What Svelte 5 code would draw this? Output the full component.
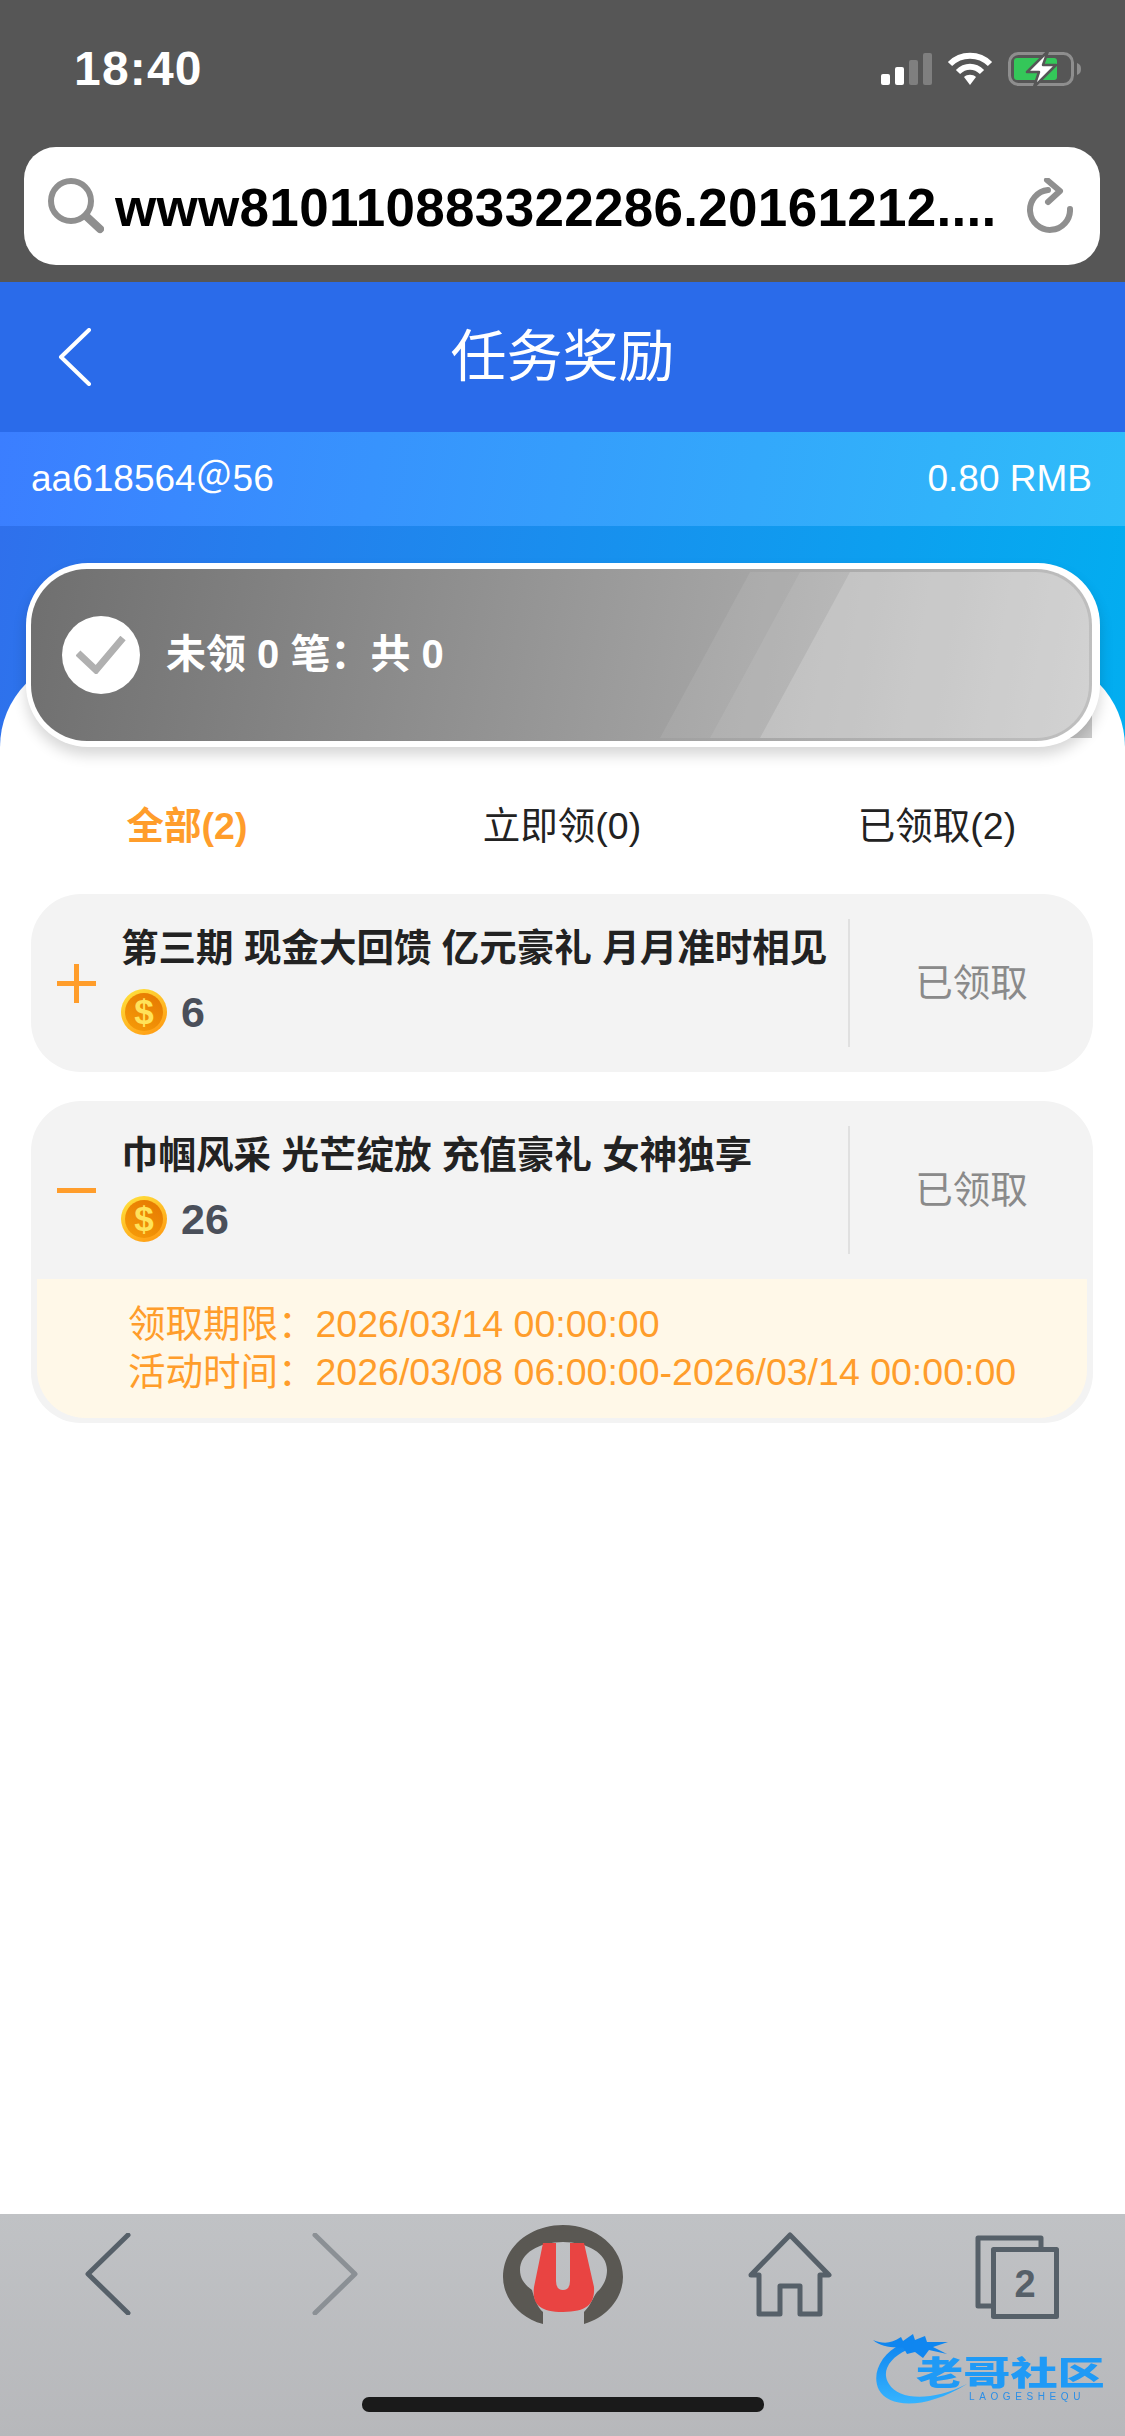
<script>
  const tabs = [
    { label: "全部(2)", active: true },
    { label: "立即领(0)", active: false },
    { label: "已领取(2)", active: false },
  ];

  const tasks = [
    { title: "第三期 现金大回馈 亿元豪礼 月月准时相见", coins: 6, open: false },
    {
      title: "巾帼风采 光芒绽放 充值豪礼 女神独享",
      coins: 26,
      open: true,
      deadline: "2026/03/14 00:00:00",
      period: "2026/03/08 06:00:00-2026/03/14 00:00:00",
    },
  ];
</script>

<div class="page">
  <div class="chrome">
    <div class="status">
      <span class="time">18:40</span>
      <div class="status-icons">
        <div class="signal">
          <i class="on h1"></i><i class="on h2"></i><i class="h3"></i><i class="h4"></i>
        </div>
        <svg class="wifi" viewBox="0 0 46 34" width="46" height="34">
          <path d="M3 12 C14 1 32 1 43 12" fill="none" stroke="#fff" stroke-width="6" />
          <path d="M11 20 C18 13 28 13 35 20" fill="none" stroke="#fff" stroke-width="6" />
          <path d="M17 25 C20 22 26 22 29 25 L23 33 Z" fill="#fff" />
        </svg>
        <svg class="battery" viewBox="0 0 74 36" width="74" height="36">
          <rect x="1.5" y="2.5" width="63" height="31" rx="9" fill="none" stroke="#8e8e8e" stroke-width="3" />
          <rect x="6" y="7" width="43" height="22" rx="3" fill="#34c759" />
          <path d="M69 12 C72 13 73 15 73 18 C73 21 72 23 69 24 Z" fill="#8e8e8e" />
          <path d="M40 0 L19 21 H31 L26 36 L48 14 H35 Z" fill="#fff" stroke="#565656" stroke-width="2.5" stroke-linejoin="round" />
        </svg>
      </div>
    </div>
    <div class="urlbar">
      <svg viewBox="0 0 56 56" width="56" height="56">
        <circle cx="23" cy="23" r="20" fill="none" stroke="#8f8f8f" stroke-width="6" />
        <path d="M38 38 L52 51" stroke="#8f8f8f" stroke-width="8" stroke-linecap="round" />
      </svg>
      <span class="url">www810110883322286.20161212....</span>
      <svg viewBox="0 0 46 56" width="46" height="56">
        <path d="M21 12 A20 20 0 1 0 43 31" fill="none" stroke="#8f8f8f" stroke-width="6" stroke-linecap="round" />
        <path d="M20 2 L33 13 L21 24" fill="none" stroke="#8f8f8f" stroke-width="6" stroke-linecap="round" stroke-linejoin="round" />
      </svg>
    </div>
  </div>

  <header class="navbar">
    <svg class="nav-back" viewBox="0 0 34 58" width="34" height="58">
      <path d="M31 2 L3 29 L31 56" fill="none" stroke="#fff" stroke-width="4" stroke-linecap="round" stroke-linejoin="round" />
    </svg>
    <h1>任务奖励</h1>
  </header>

  <div class="account">
    <span>aa618564＠56</span>
    <span>0.80 RMB</span>
  </div>

  <div class="hero">
    <div class="claim-corner"></div>
    <div class="claim-card">
      <div class="claim-fill">
        <div class="sheens">
          <div class="sheen s1"></div>
          <div class="sheen s2"></div>
          <div class="sheen s3"></div>
        </div>
        <div class="check">
          <svg viewBox="0 0 50 38" width="50" height="38">
            <path d="M2 17 L20 34 L47 2" fill="none" stroke="#b0b0b0" stroke-width="7" />
          </svg>
        </div>
        <span class="claim-text">未领 0 笔：共 0</span>
      </div>
    </div>
  </div>

  <main class="sheet">
    <nav class="tabs">
      {#each tabs as tab}
        <span class="tab" class:active={tab.active}>{tab.label}</span>
      {/each}
    </nav>

    <div class="list">
      {#each tasks as task}
        <section class="task">
          <div class="task-row">
            <span class="toggle" class:open={task.open}></span>
            <div class="task-main">
              <div class="task-title">{task.title}</div>
              <div class="task-coins">
                <svg viewBox="0 0 46 46" width="46" height="46">
                  <defs>
                    <linearGradient id="rim-{task.coins}" x1="0.2" y1="0" x2="0.8" y2="1">
                      <stop offset="0" stop-color="#ffe03c" />
                      <stop offset="1" stop-color="#ff9a12" />
                    </linearGradient>
                    <linearGradient id="face-{task.coins}" x1="0.8" y1="0" x2="0.2" y2="1">
                      <stop offset="0" stop-color="#e67a02" />
                      <stop offset="1" stop-color="#f59a08" />
                    </linearGradient>
                  </defs>
                  <circle cx="23" cy="23" r="23" fill="url(#rim-{task.coins})" />
                  <circle cx="23" cy="23" r="19" fill="url(#face-{task.coins})" />
                  <text x="23" y="35" text-anchor="middle" class="coin-mark">$</text>
                </svg>
                <span>{task.coins}</span>
              </div>
            </div>
            <div class="task-state">已领取</div>
          </div>
          {#if task.open}
            <div class="task-detail">
              <div><span class="detail-label">领取期限：</span>{task.deadline}</div>
              <div><span class="detail-label">活动时间：</span>{task.period}</div>
            </div>
          {/if}
        </section>
      {/each}
    </div>
  </main>

  <footer class="toolbar">
    <div class="tool-icons">
      <svg viewBox="0 0 46 82" width="46" height="82">
        <path d="M43 2 L3 41 L43 80" fill="none" stroke="#566069" stroke-width="5" stroke-linecap="round" stroke-linejoin="round" />
      </svg>
      <svg viewBox="0 0 46 82" width="46" height="82">
        <path d="M3 2 L43 41 L3 80" fill="none" stroke="#8b9095" stroke-width="5" stroke-linecap="round" stroke-linejoin="round" />
      </svg>
      <svg viewBox="0 0 120 99" width="120" height="99">
        <path d="M40 99 C15 92 0 72 0 52 C0 22 27 0 60 0 C93 0 120 22 120 52 C120 72 105 92 81 99 L81 87 C88 80 90 72 94 67 C100 62 104 54 104 45 C104 28 84 17 60 17 C36 17 17 28 17 45 C17 54 22 60 29 65 C31 72 34 82 40 87 Z" fill="#5a5853" />
        <path d="M40 18 H53 V56 Q53 65 60 65 Q67 65 67 56 V18 H81 L91 62 C92 78 85 87 60 87 C35 87 29 78 31 62 Z" fill="#e94442" />
      </svg>
      <svg viewBox="0 0 84 85" width="84" height="85">
        <path d="M42 3 L81 43 H72 V82 H52 V54 H32 V82 H11 V43 H3 Z" fill="none" stroke="#566069" stroke-width="5" stroke-linejoin="round" />
      </svg>
      <svg viewBox="0 0 84 84" width="84" height="84">
        <path d="M16 71 H3 V3 H66 V13" fill="none" stroke="#566069" stroke-width="5" stroke-linejoin="round" />
        <rect x="18.5" y="14.5" width="63" height="67" fill="none" stroke="#566069" stroke-width="5" stroke-linejoin="round" />
        <text x="50" y="62" text-anchor="middle" class="tab-count">2</text>
      </svg>
    </div>
    <div class="home-bar"></div>
    <div class="stamp">
      <svg viewBox="0 0 100 76" width="100" height="76">
        <defs>
          <linearGradient id="stamp-fill" x1="0" y1="0" x2="0" y2="1">
            <stop offset="0" stop-color="#0f86f0" />
            <stop offset="1" stop-color="#36b4ff" />
          </linearGradient>
        </defs>
        <path d="M28 12 C8 22 -2 42 6 58 C16 76 52 78 94 52 C58 70 26 68 16 52 C8 40 16 26 34 18 Z" fill="url(#stamp-fill)" />
        <path d="M0 8 C10 12 18 12 28 5 L30 9 L40 2 L42 8 L52 4 L54 10 L75 10 L60 15 L74 22 L56 18 L50 26 L42 20 L34 22 L30 15 C20 16 8 15 0 8 Z" fill="#0f86f0" />
      </svg>
      <span class="stamp-name">老哥社区</span>
      <span class="stamp-sub">LAOGESHEQU</span>
    </div>
  </footer>
</div>

<style>
  :global(body) {
    margin: 0;
    background: #fff;
  }

  .page {
    width: 1125px;
    height: 2436px;
    display: flex;
    flex-direction: column;
    overflow: hidden;
    font-family: "Liberation Sans", "Noto Sans CJK SC", sans-serif;
    color: #222;
  }

  /* browser chrome */
  .chrome {
    height: 282px;
    box-sizing: border-box;
    background: #565656;
    padding: 52px 25px 0 24px;
  }

  .status {
    height: 34px;
    display: flex;
    align-items: center;
    justify-content: space-between;
    padding: 0 18px 0 50px;
    margin-bottom: 61px;
  }

  .time {
    font-size: 48px;
    font-weight: 700;
    line-height: 40px;
    color: #fff;
    letter-spacing: 1.2px;
  }

  .status-icons {
    display: flex;
    align-items: center;
    gap: 15px;
  }

  .signal {
    display: flex;
    align-items: flex-end;
    gap: 5px;
    height: 32px;
  }

  .signal i {
    width: 9px;
    border-radius: 2px;
    background: #7f7f7f;
  }

  .signal i.on {
    background: #fff;
  }

  .h1 { height: 11px; }
  .h2 { height: 18px; }
  .h3 { height: 25px; }
  .h4 { height: 32px; }

  .urlbar {
    height: 118px;
    display: flex;
    align-items: center;
    gap: 11px;
    box-sizing: border-box;
    padding: 0 27px 0 24px;
    background: #fff;
    border-radius: 32px;
  }

  .url {
    flex: 1;
    padding-top: 2px;
    font-size: 53px;
    font-weight: 700;
    letter-spacing: 0.3px;
    color: #000;
    white-space: nowrap;
    overflow: hidden;
  }

  /* page header */
  .navbar {
    height: 150px;
    position: relative;
    display: flex;
    align-items: center;
    justify-content: center;
    background: #2a6bea;
  }

  .nav-back {
    position: absolute;
    left: 58px;
    top: 46px;
  }

  .navbar h1 {
    margin: 0 0 1px;
    font-size: 56px;
    line-height: 70px;
    font-weight: 400;
    color: #fff;
  }

  .account {
    height: 94px;
    display: flex;
    align-items: center;
    justify-content: space-between;
    padding: 0 33px 0 31px;
    font-size: 37px;
    line-height: 44px;
    color: #fff;
    background: linear-gradient(100deg, #3b7eff, #2fbdf9);
  }

  .hero {
    position: relative;
    height: 221px;
    box-sizing: border-box;
    padding: 37px 25px 0 26px;
    background: linear-gradient(100deg, #2f70ec, #02aef0);
  }

  /* square tip of the banner art, left showing past the rounded frame */
  .claim-corner {
    position: absolute;
    z-index: 2;
    right: 33px;
    bottom: 9px;
    width: 60px;
    height: 60px;
    background: #cbcbcb;
  }

  .claim-card {
    position: relative;
    z-index: 3;
    height: 184px;
    box-sizing: border-box;
    padding: 6px 8px 6px 5px;
    background: #fff;
    border-radius: 62px;
    box-shadow: 0 8px 14px rgba(0, 0, 0, 0.16);
  }

  .claim-fill {
    position: relative;
    height: 100%;
    display: flex;
    align-items: center;
    gap: 26px;
    box-sizing: border-box;
    padding-left: 31px;
    overflow: hidden;
    background: linear-gradient(100deg, #6f6f6f, #c0c0c0);
    border-radius: 56px;
  }

  .sheens {
    position: absolute;
    inset: 3px;
    overflow: hidden;
    border-radius: 53px;
  }

  .sheen {
    position: absolute;
    top: 0;
    bottom: 0;
    right: 0;
    clip-path: polygon(90px 0, 100% 0, 100% 100%, 0 100%);
    background: rgba(255, 255, 255, 0.08);
  }

  .s1 { left: 626px; }
  .s2 { left: 676px; }
  .s3 { left: 726px; background: rgba(255, 255, 255, 0.18); }

  .check {
    position: relative;
    width: 78px;
    height: 78px;
    display: flex;
    align-items: center;
    justify-content: center;
    border-radius: 50%;
    background: #fff;
  }

  .claim-text {
    position: relative;
    margin-bottom: 3px;
    font-size: 40px;
    line-height: 50px;
    font-weight: 700;
    color: #fff;
  }

  /* white panel */
  .sheet {
    flex: 1;
    position: relative;
    z-index: 1;
    margin-top: -90px;
    background: #fff;
    border-radius: 90px 90px 0 0;
    padding: 0 32px 0 31px;
  }

  .tabs {
    height: 237px;
    display: grid;
    grid-template-columns: 312px 438px 312px;
    box-sizing: border-box;
    padding-top: 131px;
    justify-items: center;
    align-items: start;
  }

  .tab {
    font-size: 37.5px;
    line-height: 76px;
    color: #222;
  }

  .tab.active {
    color: #ff9d2b;
    font-weight: 700;
  }

  .list {
    display: flex;
    flex-direction: column;
    gap: 29px;
  }

  .task {
    border-radius: 50px;
    background: #f3f3f3;
    overflow: hidden;
  }

  .task-row {
    height: 178px;
    display: flex;
    align-items: center;
  }

  .toggle {
    position: relative;
    flex: none;
    width: 39px;
    height: 39px;
    margin: 0 25px 0 26px;
  }

  .toggle::before,
  .toggle::after {
    content: "";
    position: absolute;
    background: #ff9d2b;
  }

  .toggle::before {
    left: 0;
    right: 0;
    top: 17px;
    height: 5px;
  }

  .toggle::after {
    top: 0;
    bottom: 0;
    left: 17px;
    width: 5px;
  }

  .toggle.open::after {
    display: none;
  }

  .task-main {
    flex: 1;
    min-width: 0;
    padding-bottom: 8px;
  }

  .task-title {
    font-size: 37.5px;
    font-weight: 700;
    line-height: 48px;
    color: #222;
    white-space: nowrap;
  }

  .task-coins {
    display: flex;
    align-items: center;
    gap: 14px;
    margin-top: 17px;
    font-size: 43px;
    line-height: 46px;
    font-weight: 700;
    color: #4a4f5a;
  }

  .coin-mark {
    font-family: "Liberation Sans", sans-serif;
    font-size: 35px;
    font-weight: 700;
    fill: #ffe25a;
  }

  .task-state {
    flex: none;
    width: 245px;
    height: 128px;
    display: flex;
    align-items: center;
    justify-content: center;
    box-sizing: border-box;
    border-left: 2px solid #e0e0e0;
    font-size: 37.5px;
    line-height: 44px;
    color: #8a8a8a;
  }

  .task-detail {
    margin: 0 6px 5px;
    padding: 21px 0 0 91px;
    height: 139px;
    box-sizing: border-box;
    background: #fff8e8;
    border-radius: 0 0 48px 48px;
    font-size: 37.5px;
    line-height: 48px;
    color: #ff9d2b;
    white-space: nowrap;
  }

  /* bottom toolbar */
  .toolbar {
    position: relative;
    height: 222px;
    box-sizing: border-box;
    padding-top: 11px;
    background: linear-gradient(#c0c2c5, #b7b8bb);
  }

  .tool-icons {
    display: flex;
    align-items: flex-start;
    height: 100px;
    padding-left: 85px;
  }

  .tool-icons svg:nth-child(1) { margin: 8px 181px 0 0; }
  .tool-icons svg:nth-child(2) { margin: 8px 145px 0 0; }
  .tool-icons svg:nth-child(3) { margin: 0 125px 0 0; }
  .tool-icons svg:nth-child(4) { margin: 7px 143px 0 0; }
  .tool-icons svg:nth-child(5) { margin: 10px 0 0 0; }

  .home-bar {
    width: 402px;
    height: 15px;
    margin: 72px auto 0;
    border-radius: 7px;
    background: #1a1a1a;
  }

  .tab-count {
    font-family: "Liberation Sans", sans-serif;
    font-size: 38px;
    font-weight: 700;
    fill: #566069;
  }

  /* watermark stamped over the corner of the toolbar */
  .stamp {
    position: absolute;
    left: 873px;
    top: 118px;
    width: 240px;
    height: 76px;
    filter: blur(0.7px);
  }

  .stamp svg {
    position: absolute;
    left: 0;
    top: 0;
  }

  .stamp-name {
    position: absolute;
    left: 43px;
    top: 26px;
    font-size: 33px;
    line-height: 32px;
    font-weight: 900;
    white-space: nowrap;
    color: #1f9af6;
    transform: scaleX(1.43);
    transform-origin: left center;
  }

  .stamp-sub {
    position: absolute;
    left: 96px;
    top: 60px;
    font-size: 10px;
    line-height: 9px;
    letter-spacing: 4.6px;
    white-space: nowrap;
    color: #2a8fe8;
  }
</style>
